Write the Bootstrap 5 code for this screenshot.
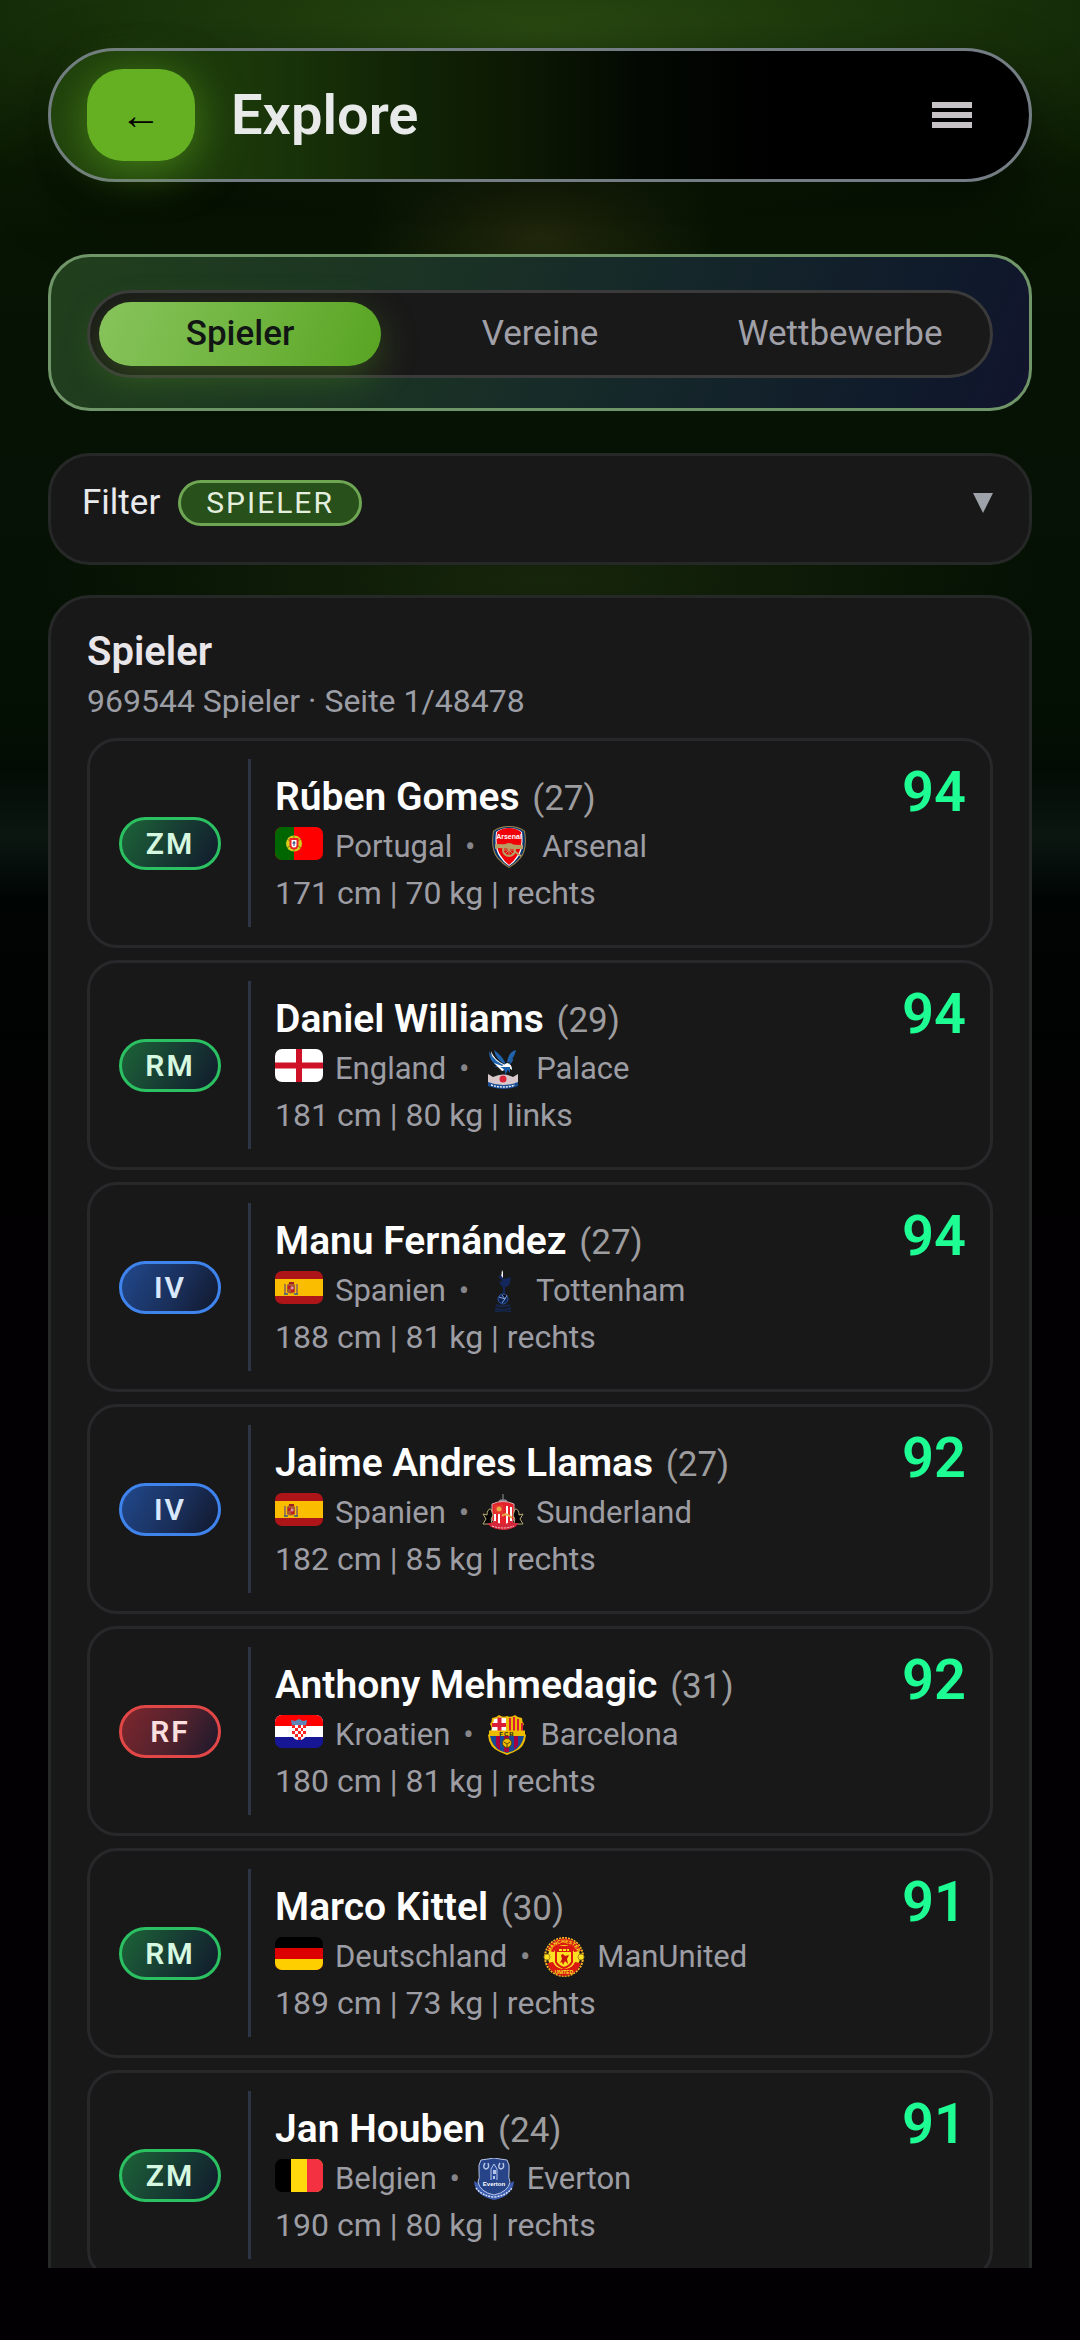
<!DOCTYPE html>
<html lang="de" data-bs-theme="dark">
<head>
<meta charset="utf-8">
<meta name="viewport" content="width=device-width, initial-scale=1">
<title>Explore</title>
<link href="https://cdn.jsdelivr.net/npm/bootstrap@5.3.0/dist/css/bootstrap.min.css" rel="stylesheet">
<style>
  body {
    font-family: Roboto, "Liberation Sans", sans-serif;
    color: #e8eaed;
    background-color: #020002;
    background-image:
      radial-gradient(180px 110px at 50% 236px, rgba(52, 56, 18, .6), transparent),
      radial-gradient(760px 190px at 50% 30px, rgba(52, 90, 22, .7), transparent),
      radial-gradient(500px 120px at 50% 580px, rgba(34, 52, 16, .6), transparent),
      linear-gradient(180deg, transparent 770px, rgba(26, 44, 38, .4) 835px, transparent 900px),
      linear-gradient(180deg, #0d2105 0, #0a1a03 150px, #071303 260px, #061204 420px, #041003 700px, #020a04 800px, #000403 900px, #010201 1100px, #020002 1250px);
    background-repeat: no-repeat;
    padding: 48px 48px 72px;
  }
  .topbar {
    border: 3px solid #737d83;
    border-radius: 67px;
    padding: 18px 57px 18px 36px;
    background: linear-gradient(90deg, #1f3f0c 0, #1b380a 20%, #112405 36%, #0b1603 50%, #030902 60%, #000 74%);
    box-shadow: 0 24px 60px rgba(0, 0, 0, .5);
  }
  .back-btn {
    width: 108px; height: 92px; border: 0; border-radius: 36px;
    background: #64b022; color: #000; font-size: 41px; line-height: 41px; padding: 0;
    box-shadow: 0 8px 48px rgba(100, 180, 34, .6);
  }
  .page-title { font-size: 56px; line-height: 66px; font-weight: 600; margin: 0 0 0 36px; color: #e8eaea; }
  .menu-btn { border: 0; background: none; padding: 0; color: #c6c2c6; }
  .tab-panel {
    margin-top: 72px; padding: 33px 36px 30px; border: 3px solid #6f9569; border-radius: 42px;
    background: linear-gradient(110deg, #213f1c 0, #1b3424 35%, #15272a 62%, #0f192b 90%, #14122e 105%);
  }
  .tab-track {
    display: grid; grid-template-columns: repeat(3, 1fr); column-gap: 18px;
    padding: 9px; border: 3px solid #3b3a3b; border-radius: 44px; background: #1a1919;
  }
  .tab-btn {
    height: 64px; border: 0; border-radius: 32px; background: none;
    color: #a0a0a8; font-size: 35px; line-height: 40px; padding: 0;
  }
  .tab-btn.active {
    color: #111614; font-weight: 500;
    background: linear-gradient(110deg, #87c35b 0, #6fb43e 55%, #58a422 100%);
    box-shadow: 0 12px 36px rgba(90, 160, 34, .35);
  }
  .surface { border: 3px solid #262827; border-radius: 42px; background: #191819; color: inherit; }
  .filter-btn { margin-top: 42px; padding: 24px 36px 36px 31px; font-size: 35px; line-height: 46px; }
  .filter-tag {
    margin-left: 18px; padding: 0 25px; border: 3px solid #6fa653; border-radius: 23px;
    background: #28501a; font-size: 30px; line-height: 40px; letter-spacing: 2px; color: #e4efdf;
  }
  .list-panel { margin-top: 30px; padding: 30px 36px; }
  .list-title { font-size: 40px; line-height: 48px; font-weight: 600; margin: 0; color: #e8e6e9; }
  .list-sub { font-size: 32px; line-height: 48px; margin: 1px 0 13px; color: #9c9ea5; }
  .player-list { gap: 12px; }
  .player {
    border: 3px solid #28272a; border-radius: 30px; padding: 18px 24px 18px 29px;
    color: #9d9da4; text-decoration: none;
  }
  .pos-chip {
    width: 102px; border: 3px solid; border-radius: 27px; text-align: center;
    font-size: 30px; line-height: 47px; font-weight: 600; letter-spacing: 2px;
  }
  .pos-mid { border-color: #2bc062; color: #d6f8e0; background: linear-gradient(120deg, #1c6437 0, #173a33 55%, #111a2c 100%); }
  .pos-def { border-color: #3f83ec; color: #d8e8fc; background: linear-gradient(120deg, #21488c 0, #1a305c 55%, #11182c 100%); }
  .pos-att { border-color: #e24747; color: #fbdede; background: linear-gradient(120deg, #7e262c 0, #50222e 55%, #1b182b 100%); }
  .player-body { margin-left: 27px; border-left: 3px solid #2d3443; padding-left: 24px; min-height: 168px; }
  .player-name { font-size: 39px; line-height: 48px; margin: 2px 0 0; color: #fff; font-weight: 600; }
  .player-age { font-size: 35px; font-weight: 400; color: #9d9d9f; margin-left: 3px; }
  .player-meta { height: 48px; font-size: 31px; line-height: 48px; }
  .flag { width: 48px; height: 33px; border-radius: 7px; margin: 4px 12px 0 0; }
  .sep { width: 36px; text-align: center; color: #85858a; }
  .crest { width: 42px; height: 42px; margin-right: 12px; }
  .player-facts { font-size: 32px; line-height: 44px; }
  .rating { font-size: 56px; line-height: 66px; font-weight: 600; color: #1dfd93; }
</style>
</head>
<body class="vh-100 overflow-hidden d-flex flex-column">

<svg class="d-none" aria-hidden="true">
  <symbol id="f-pt" viewBox="0 0 48 33"><path fill="#f00" d="M0 0h48v33H0z"/><path fill="#060" d="M0 0h19v33H0z"/><circle cx="19" cy="16.500" r="8" fill="#d8cf1c"/><path d="M12 12l14 9M12 21l14-9M19 9v15" stroke="#7c8410" stroke-width="1"/><path d="M14.500 11h9v7a4.500 4.500 0 0 1-9 0z" fill="#e22"/><path d="M16.500 13h5v5a2.500 2.500 0 0 1-5 0z" fill="#fff"/><path d="M19 14v5M17.500 16h3" stroke="#236"/></symbol>
  <symbol id="f-en" viewBox="0 0 48 33"><path fill="#fff" d="M0 0h48v33H0z"/><path fill="#ce1126" d="M21 0h6v33h-6z"/><path fill="#ce1126" d="M0 13.500h48v6H0z"/></symbol>
  <symbol id="f-es" viewBox="0 0 48 33"><path fill="#ad1519" d="M0 0h48v33H0z"/><path fill="#fabd00" d="M0 8h48v17H0z"/><path d="M12 14q4-5 8 0v7q-4 3-8 0z" fill="#ad5a30"/><path d="M10 13v10M22 13v10" stroke="#a5784a" stroke-width="2"/><path d="M13 15h3v3h-3zM16 18h3v3h-3z" fill="#c61b1b"/><circle cx="17" cy="17" r="1.500" fill="#d991b3"/><path d="M14 12h5" stroke="#a02020" stroke-width="2"/><path d="M9 23h4M19 23h4" stroke="#345a8a" stroke-width="1.500"/></symbol>
  <symbol id="f-hr" viewBox="0 0 48 33"><path fill="#171796" d="M0 0h48v33H0z"/><path fill="#fff" d="M0 0h48v22H0z"/><path fill="#f00" d="M0 0h48v11H0z"/><path d="M16 5l4 1 4-2 4 2 4-1-1 6H17z" fill="#5f86b8"/><path d="M17 10h14v9q-1 6-7 6t-7-6z" fill="#fff"/><g fill="#f22"><path d="M17 10h3v3h-3zM23 10h3v3h-3zM28 10h3v3h-3zM20 13h3v3h-3zM26 13h2v3h-2zM17 16h3v3h-3zM23 16h3v3h-3zM28 16h3v3h-3zM20 19h3v3h-3zM26 19h2v3h-2zM23 22h3v3h-3z"/></g></symbol>
  <symbol id="f-de" viewBox="0 0 48 33"><path d="M0 0h48v33H0z"/><path fill="#d00" d="M0 11h48v22H0z"/><path fill="#ffce00" d="M0 22h48v11H0z"/></symbol>
  <symbol id="f-be" viewBox="0 0 48 33"><path d="M0 0h48v33H0z"/><path fill="#ffd90c" d="M16 0h32v33H16z"/><path fill="#f33140" d="M32 0h16v33H32z"/></symbol>

  <symbol id="c-ars" viewBox="0 0 42 42"><path d="M21 0Q31 0 37 5q3 18-4 27-5 6-12 10Q14 38 9 32 2 23 5 5q6-5 16-5z" fill="#9c824a"/><path d="M21 1Q30 1 36 5.500q3 17-4 26-4 5-11 9.500Q14 36 10 31.500 3 22.500 6 5.500 12 1 21 1z" fill="#063672"/><path d="M21 2q8 0 13 4 2 17-4 25-3 5-9 9-6-4-9-9Q6 23 8 6q5-4 13-4z" fill="#fff"/><path d="M21 2q7 0 12 4 2 16-4 24-3 5-8 9-5-4-8-9Q7 22 9 6q5-4 12-4z" fill="#ef0107"/><text x="21" y="13" font-family="Liberation Sans, sans-serif" font-size="7" font-weight="700" text-anchor="middle" fill="#fff">Arsenal</text><path d="M7 18l28 1v4H24L10 22l-3 1z" fill="#b99e64"/><circle cx="21" cy="24" r="6" fill="none" stroke="#b99e64" stroke-width="2"/><path d="M21 18v12M15 24h12M17 20l8 8M25 20l-8 8" stroke="#b99e64"/><path d="M26 25l7 5" stroke="#b99e64" stroke-width="2"/></symbol>
  <symbol id="c-pal" viewBox="0 0 42 42"><path d="M9 3q0 9 9 15l5-1Q12 12 9 3z" fill="#fff"/><path d="M7 3q0 11 9 15l-4 0 9 3 5-2Q12 14 7 3zM12 2q2 10 12 15-3-9-12-15zM34 2q-8 2-9 13 7-3 9-13zM31 9q1 5-5 8z" fill="#2064ae"/><path d="M12 15l8 3 5-3q5 1 5 7l-3-2-7 3z" fill="#fff"/><path d="M18 19q6 2 5 8l3-5 2 3v-6z" fill="#1b5eaa"/><path d="M6 26l5 3q10-5 20 0l5-3v10l-5 2q-10 2-20 0l-5-2z" fill="#d8c8cc"/><circle cx="21" cy="31" r="3.500" fill="#d9243a"/><path d="M6 34q15 6 30 0v4q-15 6-30 0z" fill="#1b4d94"/><path d="M9 37q12 4 24 0" fill="none" stroke="#e8eef8" stroke-width="1.500" stroke-dasharray="2 1"/></symbol>
  <symbol id="c-tot" viewBox="0 0 42 42"><path d="M20 0l1 2v6h-2z" fill="#f4f6ff"/><path d="M17 5q4 1 4 4 4-1 8-2l-1 5q-1 5-5 5v7h-2v-7q-3-2-4-6l3 1q0-3-3-4z" fill="#14275c"/><circle cx="21" cy="29" r="5" fill="#10224f" stroke="#2854a0"/><path d="M17 27l6 2M20 25l3 4 2-4M23 29l-3 4" stroke="#7fa2dc"/><path d="M14 35q7 3 14 0M13 38q8 4 16 0M13 41q8 3 16 0" fill="none" stroke="#15264e" stroke-width="2"/></symbol>
  <symbol id="c-sun" viewBox="0 0 42 42"><path d="M21 2v6M18 8h6l3 5H15z" stroke="#91949c" fill="#7d8088"/><path d="M10 12q11-5 22 0v15q-3 7-11 8-8-1-11-8z" fill="#e5222c" stroke="#d8a5a8"/><path d="M13 15v14M17 14v18M25 14v18M29 15v14" stroke="#fff" stroke-width="2"/><path d="M12 13h9v9h-9z" fill="#e5352c"/><circle cx="17" cy="17" r="2.500" fill="#e6a94a"/><path d="M20 24q4-4 10 2" stroke="#e6a94a" fill="none" stroke-width="2"/><path d="M9 17q-4 0-4 6l-4-1 3 5-3 5h9q-2-5 1-9z" fill="#050505" stroke="#b9ad73"/><path d="M33 17q4 0 4 6l4-1-3 5 3 5h-9q2-5-1-9z" fill="#050505" stroke="#b9ad73"/><path d="M5 31q5 1 7-2 9 6 18 0 2 3 7 2l-4 4q-12 6-24 0z" fill="#d6273a"/><path d="M10 34q11 4 22 0" fill="none" stroke="#f1c8cb" stroke-dasharray="2 1"/></symbol>
  <symbol id="c-bar" viewBox="0 0 42 42"><path d="M6 4q4 0 7-3 4 3 8 1 4 2 8-1 3 3 7 3 0 4 2 6-4 6 2 11-1 13-12 17l-7 3-7-3Q3 34 2 21q6-5 2-11 2-2 2-6z" fill="#edbb00"/><path d="M8 5q4 0 6-2 3 2 6 1v14H5q2-4 1-8 2-2 2-5z" fill="#fff"/><path d="M11.500 3.500h4V18h-4zM6 9h14v4H6z" fill="#db1e36"/><path d="M24 4v14M28 3v15M32 5v13M36 9v9" stroke="#db1e36" stroke-width="2"/><path d="M4 22h34q-2 11-11 15l-6 2-6-2Q6 33 4 22z" fill="#174a93"/><path d="M10 22h4v14q-3-2-4-5zM18 22h5v16h-5zM28 22h4v9l-4 5z" fill="#a50044"/><path d="M3 16.500h36V22H3z" fill="#edbb00"/><text x="21" y="22" font-family="Liberation Sans, sans-serif" font-size="6" font-weight="700" letter-spacing="1" text-anchor="middle" fill="#222">FCB</text><circle cx="21" cy="29" r="4.500" fill="#edbb00" stroke="#5d4c10"/><path d="M18 28l3 2 3-2M21 30v3" stroke="#5d4c10" fill="none"/></symbol>
  <symbol id="c-man" viewBox="0 0 42 42"><circle cx="21" cy="21" r="16" fill="#fbe122"/><circle cx="21" cy="21" r="19" fill="none" stroke="#fbb822" stroke-width="2" stroke-dasharray="2 1"/><path d="M4 15Q8 3 21 2.500 34 3 38 15l-7 1Q29 9 21 9t-10 7zM4 27q4 12 17 13 13-1 17-13l-6-1q-3 7-11 7t-11-7z" fill="#da1a10"/><circle cx="4" cy="21" r="3" fill="#fbe122" stroke="#b08914"/><circle cx="38" cy="21" r="3" fill="#fbe122" stroke="#b08914"/><path d="M13 11h16v15q-2 4-8 6-6-2-8-6z" fill="#fbe122" stroke="#da1a10" stroke-width="2"/><path d="M14 11h14v5H14z" fill="#da1a10"/><path d="M16 14h10" stroke="#fbe122" stroke-width="2" stroke-dasharray="3 1"/><path d="M18 19l2-1 2 2 4-1-2 4 1 5-3-3-2 4-1-3-2 1 2-4z" fill="#c91309"/><path id="mu-top" d="M8 16Q11 7 21 7t13 9" fill="none"/><text font-family="Liberation Sans, sans-serif" font-size="5" font-weight="700" fill="#fbe122" text-anchor="middle"><textPath href="#mu-top" startOffset="50%">MANCHESTER</textPath></text><text x="21" y="38" font-family="Liberation Sans, sans-serif" font-size="5" font-weight="700" fill="#fbe122" text-anchor="middle">UNITED</text></symbol>
  <symbol id="c-eve" viewBox="0 0 42 42"><path d="M1 23q1 15 20 19 19-4 20-19l-5 3v-3H6v3z" fill="#3d5db0"/><path d="M8 2l7-1 6-1 6 1 7 1q3 4 2 12-1 6 1 10-2 10-16 13Q7 34 5 24q2-4 1-10Q5 6 8 2z" fill="#274488" stroke="#b5c3e6"/><path d="M12 5q-3 5 1 6 4-1 2-6M27 5q-3 5 1 6 4-1 2-6" stroke="#b5c3e6" fill="none" stroke-width="1.500"/><path d="M18 22V11l3-5 3 5v11" fill="#2b4c9c" stroke="#b5c3e6"/><path d="M20 12h3v4h-3zM20 18h2v3h-2z" fill="#b5c3e6"/><text x="21" y="28" font-family="Liberation Sans, sans-serif" font-size="6" font-weight="700" text-anchor="middle" fill="#fff">Everton</text><path d="M3 30q6 8 18 9 12-1 18-9" fill="none" stroke="#d5def4" stroke-width="1.500" stroke-dasharray="2 1"/></symbol>
</svg>

<header class="topbar d-flex align-items-center">
  <button type="button" class="back-btn" aria-label="Zurück">←</button>
  <h1 class="page-title">Explore</h1>
  <button type="button" class="menu-btn ms-auto d-flex" aria-label="Menü">
    <svg width="40" height="26" viewBox="0 0 40 26" fill="currentColor"><path d="M0 0h40v6H0zM0 10h40v6H0zM0 20h40v6H0z"/></svg>
  </button>
</header>

<main class="flex-grow-1 overflow-hidden">
  <section class="tab-panel">
    <div class="tab-track" role="tablist">
      <button type="button" class="tab-btn active" role="tab" aria-selected="true">Spieler</button>
      <button type="button" class="tab-btn" role="tab" aria-selected="false">Vereine</button>
      <button type="button" class="tab-btn" role="tab" aria-selected="false">Wettbewerbe</button>
    </div>
  </section>

  <button type="button" class="surface filter-btn w-100 d-flex align-items-center text-start" aria-expanded="false">
    <span>Filter</span><span class="filter-tag">SPIELER</span>
    <svg class="ms-auto" width="20" height="20" viewBox="0 0 20 20" fill="#9da3a8"><path d="M0 0h20L10 20z"/></svg>
  </button>

  <section class="surface list-panel">
    <h2 class="list-title">Spieler</h2>
    <p class="list-sub">969544 Spieler · Seite 1/48478</p>
    <div class="player-list d-flex flex-column">
      <a href="#" class="player d-flex align-items-center">
        <span class="pos-chip pos-mid">ZM</span>
        <div class="player-body flex-grow-1 d-flex flex-column justify-content-center">
          <h3 class="player-name">Rúben Gomes <span class="player-age">(27)</span></h3>
          <div class="player-meta d-flex align-items-center"><svg class="flag align-self-start"><use href="#f-pt"/></svg><span>Portugal</span><span class="sep">•</span><svg class="crest"><use href="#c-ars"/></svg><span>Arsenal</span></div>
          <div class="player-facts">171 cm | 70 kg | rechts</div>
        </div>
        <span class="rating align-self-start">94</span>
      </a>
      <a href="#" class="player d-flex align-items-center">
        <span class="pos-chip pos-mid">RM</span>
        <div class="player-body flex-grow-1 d-flex flex-column justify-content-center">
          <h3 class="player-name">Daniel Williams <span class="player-age">(29)</span></h3>
          <div class="player-meta d-flex align-items-center"><svg class="flag align-self-start"><use href="#f-en"/></svg><span>England</span><span class="sep">•</span><svg class="crest"><use href="#c-pal"/></svg><span>Palace</span></div>
          <div class="player-facts">181 cm | 80 kg | links</div>
        </div>
        <span class="rating align-self-start">94</span>
      </a>
      <a href="#" class="player d-flex align-items-center">
        <span class="pos-chip pos-def">IV</span>
        <div class="player-body flex-grow-1 d-flex flex-column justify-content-center">
          <h3 class="player-name">Manu Fernández <span class="player-age">(27)</span></h3>
          <div class="player-meta d-flex align-items-center"><svg class="flag align-self-start"><use href="#f-es"/></svg><span>Spanien</span><span class="sep">•</span><svg class="crest"><use href="#c-tot"/></svg><span>Tottenham</span></div>
          <div class="player-facts">188 cm | 81 kg | rechts</div>
        </div>
        <span class="rating align-self-start">94</span>
      </a>
      <a href="#" class="player d-flex align-items-center">
        <span class="pos-chip pos-def">IV</span>
        <div class="player-body flex-grow-1 d-flex flex-column justify-content-center">
          <h3 class="player-name">Jaime Andres Llamas <span class="player-age">(27)</span></h3>
          <div class="player-meta d-flex align-items-center"><svg class="flag align-self-start"><use href="#f-es"/></svg><span>Spanien</span><span class="sep">•</span><svg class="crest"><use href="#c-sun"/></svg><span>Sunderland</span></div>
          <div class="player-facts">182 cm | 85 kg | rechts</div>
        </div>
        <span class="rating align-self-start">92</span>
      </a>
      <a href="#" class="player d-flex align-items-center">
        <span class="pos-chip pos-att">RF</span>
        <div class="player-body flex-grow-1 d-flex flex-column justify-content-center">
          <h3 class="player-name">Anthony Mehmedagic <span class="player-age">(31)</span></h3>
          <div class="player-meta d-flex align-items-center"><svg class="flag align-self-start"><use href="#f-hr"/></svg><span>Kroatien</span><span class="sep">•</span><svg class="crest"><use href="#c-bar"/></svg><span>Barcelona</span></div>
          <div class="player-facts">180 cm | 81 kg | rechts</div>
        </div>
        <span class="rating align-self-start">92</span>
      </a>
      <a href="#" class="player d-flex align-items-center">
        <span class="pos-chip pos-mid">RM</span>
        <div class="player-body flex-grow-1 d-flex flex-column justify-content-center">
          <h3 class="player-name">Marco Kittel <span class="player-age">(30)</span></h3>
          <div class="player-meta d-flex align-items-center"><svg class="flag align-self-start"><use href="#f-de"/></svg><span>Deutschland</span><span class="sep">•</span><svg class="crest"><use href="#c-man"/></svg><span>ManUnited</span></div>
          <div class="player-facts">189 cm | 73 kg | rechts</div>
        </div>
        <span class="rating align-self-start">91</span>
      </a>
      <a href="#" class="player d-flex align-items-center">
        <span class="pos-chip pos-mid">ZM</span>
        <div class="player-body flex-grow-1 d-flex flex-column justify-content-center">
          <h3 class="player-name">Jan Houben <span class="player-age">(24)</span></h3>
          <div class="player-meta d-flex align-items-center"><svg class="flag align-self-start"><use href="#f-be"/></svg><span>Belgien</span><span class="sep">•</span><svg class="crest"><use href="#c-eve"/></svg><span>Everton</span></div>
          <div class="player-facts">190 cm | 80 kg | rechts</div>
        </div>
        <span class="rating align-self-start">91</span>
      </a>
    </div>
  </section>
</main>

<script src="https://cdn.jsdelivr.net/npm/bootstrap@5.3.0/dist/js/bootstrap.bundle.min.js"></script>
</body>
</html>
